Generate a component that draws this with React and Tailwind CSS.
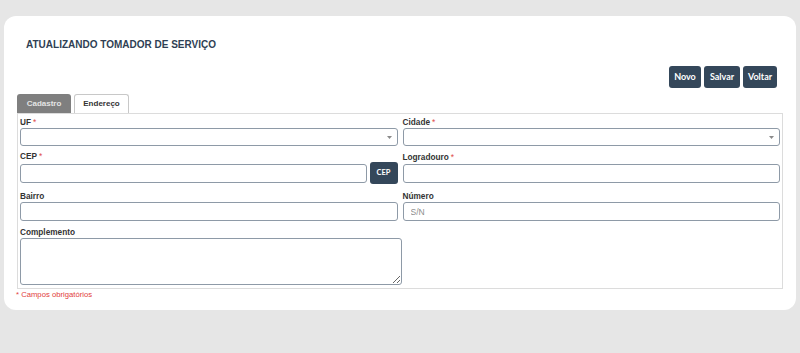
import React from 'react';

const sans = { fontFamily: '"Liberation Sans", Arial, sans-serif' };

function Label({ text, required }) {
    return (
        <div className="h-[11px] leading-[12px] text-[8.25px] font-bold text-[#333333]">
            {text}
            {required && <span className="ml-[2px] font-normal text-[#e04b4b]">*</span>}
        </div>
    );
}

function Select() {
    return (
        <div className="h-[18px] w-full border border-[#8e9aa7] rounded-[3px] bg-white flex items-center justify-end pr-[5px]">
            <svg width="5" height="3" viewBox="0 0 5 3">
                <path d="M0 0 L5 0 L2.5 3 Z" fill="#8a8a8a" />
            </svg>
        </div>
    );
}

function Input({ placeholder }) {
    return (
        <input
            placeholder={placeholder}
            className="block h-[19px] w-full border border-[#8e9aa7] rounded-[3px] bg-white px-[7px] text-[8.5px] text-[#333] placeholder:text-[#8c8c8c] outline-none"
            style={sans}
        />
    );
}

export default function App() {
    return (
        <div className="h-[353px] w-full bg-[#e6e6e6] pt-[16px] overflow-hidden" style={sans}>
            <div className="mx-[4px] h-[294px] rounded-[12px] bg-white px-[13px]">
                <h1 className="pt-[22px] pl-[9px] h-[36px] leading-[14px] text-[10px] font-bold text-[#2f3f54]">
                    ATUALIZANDO TOMADOR DE SERVIÇO
                </h1>

                <div className="mt-[14px] flex justify-end gap-[3px] pr-[6px]" style={{ fontFamily: 'Lato, sans-serif' }}>
                    <button className="h-[22px] w-[32px] rounded-[3px] bg-[#34475a] text-[9px] font-bold text-white">Novo</button>
                    <button className="h-[22px] w-[36px] rounded-[3px] bg-[#34475a] text-[9px] font-bold text-white">Salvar</button>
                    <button className="h-[22px] w-[34px] rounded-[3px] bg-[#34475a] text-[9px] font-bold text-white">Voltar</button>
                </div>

                <div className="mt-[6px] flex gap-[3px] h-[19px] items-end">
                    <div className="h-[19px] w-[54px] rounded-t-[3px] bg-[#7f7f7f] flex items-center justify-center text-[8px] font-bold text-[#e4e4e4]">
                        Cadastro
                    </div>
                    <div className="h-[19px] w-[55px] rounded-t-[3px] border border-b-0 border-[#c8c8c8] bg-white flex items-center justify-center text-[8px] font-bold text-[#333]">
                        Endereço
                    </div>
                </div>

                <div className="h-[176px] border border-[#dcdcdc] px-[2px] pt-[3px]">
                    <div className="grid grid-cols-2 gap-x-[5px]">
                        <div>
                            <Label text="UF" required />
                            <Select />
                        </div>
                        <div>
                            <Label text="Cidade" required />
                            <Select />
                        </div>
                    </div>

                    <div className="mt-[5px] grid grid-cols-2 gap-x-[5px]">
                        <div>
                            <Label text="CEP" required />
                            <div className="flex items-center gap-[3px]">
                                <Input />
                                <button
                                    className="h-[22px] w-[28px] shrink-0 rounded-[3px] bg-[#34475a] text-[7.5px] font-bold text-white"
                                    style={{ fontFamily: 'Lato, sans-serif' }}
                                >
                                    CEP
                                </button>
                            </div>
                        </div>
                        <div className="flex flex-col justify-end pb-[1px]">
                            <Label text="Logradouro" required />
                            <div className="mt-[1px]">
                                <Input />
                            </div>
                        </div>
                    </div>

                    <div className="mt-[7px] grid grid-cols-2 gap-x-[5px]">
                        <div>
                            <Label text="Bairro" />
                            <Input />
                        </div>
                        <div>
                            <Label text="Número" />
                            <Input placeholder="S/N" />
                        </div>
                    </div>

                    <div className="mt-[6px]">
                        <Label text="Complemento" />
                        <textarea
                            className="block h-[47px] w-[382px] border border-[#8e9aa7] rounded-[3px] bg-white outline-none"
                        />
                    </div>
                </div>

                <div className="-ml-[1px] h-[11px] leading-[11px] text-[7.7px] text-[#e23c3c]">* Campos obrigatórios</div>
            </div>
        </div>
    );
}
